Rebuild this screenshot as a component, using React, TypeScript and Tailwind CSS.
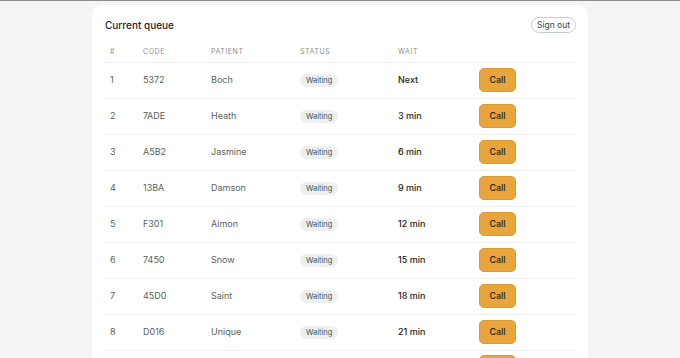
import React from 'react';

const rows = [
  { n: '1', code: '5372', name: 'Boch', wait: 'Next' },
  { n: '2', code: '7ADE', name: 'Heath', wait: '3 min' },
  { n: '3', code: 'A5B2', name: 'Jasmine', wait: '6 min' },
  { n: '4', code: '13BA', name: 'Damson', wait: '9 min' },
  { n: '5', code: 'F301', name: 'Aimon', wait: '12 min' },
  { n: '6', code: '7450', name: 'Snow', wait: '15 min' },
  { n: '7', code: '45D0', name: 'Saint', wait: '18 min' },
  { n: '8', code: 'D016', name: 'Unique', wait: '21 min' },
  // next row is below the fold, only its button peeks in
  { n: '', code: '', name: '', wait: '' },
];

export default function App() {
  return (
    <div className="h-[358px] overflow-hidden bg-[#f4f4f2] border-t border-[#8a8a8a] font-['Inter',sans-serif]">
      <div className="mx-auto mt-[4px] w-[496px] rounded-[10px] bg-white px-3 pt-3 pb-6">
        <div className="flex items-center justify-between">
          <h1 className="pl-px text-[10px] font-medium text-[#1f2328]">Current queue</h1>
          <button className="flex h-4 w-[45px] items-center justify-center rounded-[8px] border border-[#c9cfcc] text-[8.5px] text-[#3b4240]">
            Sign out
          </button>
        </div>
        <table className="mt-[9px] w-full border-collapse text-left">
          <thead>
            <tr className="border-b border-[#eeeeee] text-[7px] uppercase tracking-[0.08em] text-[#8b8f8d]">
              <th className="h-[20px] pl-[6px] font-normal w-[39px]">#</th>
              <th className="font-normal w-[68px]">Code</th>
              <th className="font-normal w-[89px]">Patient</th>
              <th className="font-normal w-[98px]">Status</th>
              <th className="font-normal w-[81px]">Wait</th>
              <th></th>
            </tr>
          </thead>
          <tbody>
            {rows.map((r, i) => (
              <tr key={i} className="h-[36px] border-b border-[#efefef] text-[9px]">
                <td className="pl-[6px] text-[#5a5f5d]">{r.n}</td>
                <td className="text-[#5a5f5d]">{r.code}</td>
                <td className="text-[#5a5f5d]">{r.name}</td>
                <td>
                  {r.n && (
                    <span className="rounded-full bg-[#edf0ee] px-[6px] py-[2px] text-[7.5px] text-[#4a514e]">Waiting</span>
                  )}
                </td>
                <td className="font-medium text-[#1b1d1c]">{r.wait}</td>
                <td>
                  <button className="h-[24px] w-[37px] rounded-[5px] border border-[#d99a35] bg-[#e9a43b] text-[9px] font-medium text-[#2a2416]">
                    {r.n ? 'Call' : ''}
                  </button>
                </td>
              </tr>
            ))}
          </tbody>
        </table>
      </div>
    </div>
  );
}
